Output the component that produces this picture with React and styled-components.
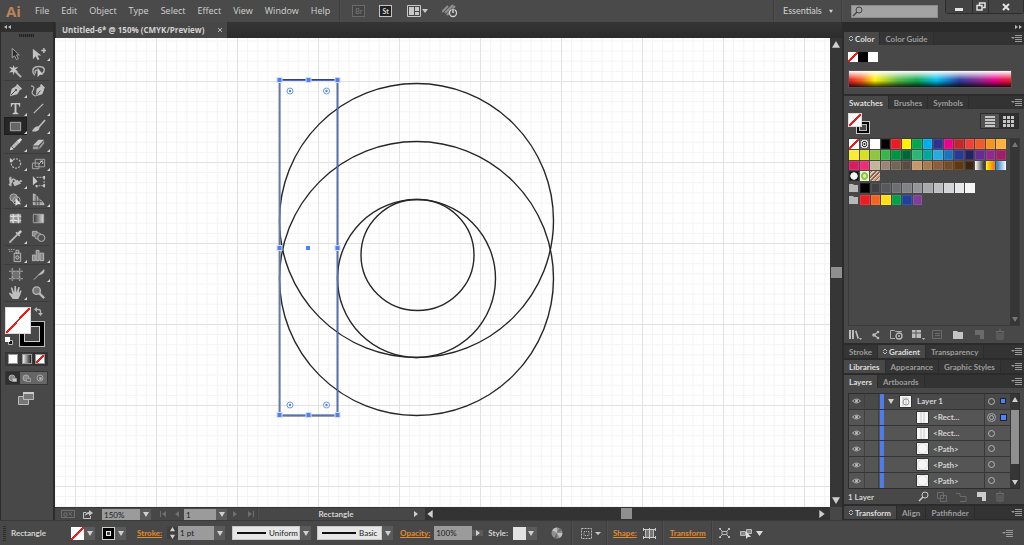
import React, {useState} from 'react';
import styled, {createGlobalStyle, css} from 'styled-components';

const GlobalStyle = createGlobalStyle`
  * {
    box-sizing: border-box;
  }

  body {
    margin: 0;
    background: #484848;
    color: #d2d2d2;
    font: 8px/12px Lato, "Open Sans", sans-serif;
  }

  button, input, select {
    font: inherit;
    color: inherit;
    margin: 0;
    padding: 0;
    border: 0;
    border-radius: 0;
    background: none;
  }

  button {
    display: flex;
    align-items: center;
    justify-content: center;
    white-space: nowrap;
  }

  svg {
    display: block;
    flex: none;
  }
`;

const Screen = styled.div`
  display: flex;
  flex-direction: column;
  height: 100vh;
  min-height: 545px;
  overflow: hidden;
`;

/* ---------- small shared parts ---------- */

const points = {
  up: '0,5 3,0 6,5',
  down: '0,1 6,1 3,6',
  left: '5,0 5,6 1,3',
  right: '1,0 1,6 5,3',
};

function Triangle({ dir = 'down', size = 6, color = '#d0d0d0' }) {
  return (
    <svg width={size} height={size} viewBox="0 0 6 6" aria-hidden="true">
      <polygon points={points[dir]} fill={color} />
    </svg>
  );
}

const Spacer = styled.div`
  flex: 1;
`;

const Gap = styled.span`
  flex: none;
  width: ${({ $size }) => $size}px;
`;

const Divider = styled.span`
  align-self: stretch;
  width: 2px;
  background: #3e3e3e;
  border-right: 1px solid #505050;
`;

const IconButton = styled.button`
  width: ${({ $width = 16 }) => $width}px;
  height: ${({ $height = 14 }) => $height}px;
  opacity: ${({ $dim }) => ($dim ? 0.3 : 1)};
`;

const none = 'linear-gradient(to bottom right, #fff calc(50% - 1px), #f01818 0 calc(50% + 1px), #fff 0)';

const NoneBox = styled.span`
  display: block;
  flex: none;
  width: ${({ $size }) => $size}px;
  height: ${({ $size }) => $size}px;
  background: ${none};
`;

/* ---------- menu bar ---------- */

const TopBar = styled.header`
  display: flex;
  align-items: center;
  height: 22px;
  flex: none;
  background: #4a4a4a;
  font-size: 9px;
`;

const Logo = styled.span`
  width: 29px;
  padding-left: 6px;
  color: #c08258;
  font: bold 15px/20px "Open Sans", sans-serif;
`;

const Menu = styled.nav`
  display: flex;
  gap: 12px;
  padding: 0 9px 0 6px;
  font-family: "Open Sans", sans-serif;
`;

const TopIcons = styled.div`
  display: flex;
  align-items: center;
  gap: 14px;
  padding-left: 11px;
`;

const AppBadge = styled.button`
  width: 13px;
  height: 12px;
  border: 1px solid ${({ $on }) => ($on ? '#c4c4c4' : '#6a6a6a')};
  background: ${({ $on }) => ($on ? '#222' : '#444')};
  color: ${({ $on }) => ($on ? '#ddd' : '#707070')};
  font-size: 7px;
  font-weight: bold;
  line-height: 8px;
`;

const Workspace = styled.label`
  display: flex;
  align-items: center;
  gap: 6px;
  padding: 0 8px;
`;

const WorkspaceSelect = styled.select`
  appearance: none;
  width: 40px;
`;

const SearchBox = styled.label`
  display: flex;
  align-items: center;
  width: 87px;
  height: 13px;
  margin: 0 7px 0 8px;
  background: #a3a3a3;
  border: 1px solid #8c8c8c;
`;

const SearchInput = styled.input`
  flex: 1;
  min-width: 0;
  color: #222;
`;

const WindowButtons = styled.div`
  display: flex;
  align-self: flex-start;
  border: 1px solid #2c2c2c;
  border-top: 0;
  border-radius: 0 0 3px 3px;
`;

const WindowButton = styled.button`
  width: ${({ $width }) => $width}px;
  height: 13px;
  background: #434343;

  & + & {
    border-left: 1px solid #2c2c2c;
  }
`;

const menuItems = ['File', 'Edit', 'Object', 'Type', 'Select', 'Effect', 'View', 'Window', 'Help'];

function MenuBar() {
  return (
    <TopBar>
      <Logo>Ai</Logo>
      <Menu>
        {menuItems.map((item) => <button key={item}>{item}</button>)}
      </Menu>
      <Divider />
      <TopIcons>
        <AppBadge>Br</AppBadge>
        <AppBadge $on>St</AppBadge>
        <IconButton $width={22} aria-label="Arrange documents">
          <svg width="21" height="12" viewBox="0 0 21 12">
            <path fill="#484848" stroke="#c8c8c8" d="M.5.5h13v11H.5z" />
            <path fill="#c8c8c8" d="M2 2h5v8H2zM8 2h4v4H8zM8 7h4v3H8zM15 4h6l-3 4z" />
          </svg>
        </IconButton>
        <IconButton aria-label="GPU performance">
          <svg width="16" height="14" viewBox="0 0 16 14">
            <path stroke="#8e8e8e" strokeWidth="2" d="m0 8 6-6M3 9l8-8M5 11l8-9" />
            <circle cx="11" cy="9" r="3.500" fill="#4a4a4a" stroke="#d4d4d4" strokeWidth="1.300" />
            <path stroke="#4a4a4a" strokeWidth="3" d="M11 4v3" />
            <path stroke="#e8e8e8" strokeWidth="1.300" d="M11 4.500V9" />
          </svg>
        </IconButton>
      </TopIcons>
      <Spacer />
      <Divider />
      <Workspace>
        <WorkspaceSelect aria-label="Workspace">
          <option>Essentials</option>
        </WorkspaceSelect>
        <Triangle size={4} />
      </Workspace>
      <Divider />
      <SearchBox>
        <svg width="12" height="11" viewBox="0 0 12 11">
          <circle cx="7" cy="4" r="3" fill="none" stroke="#444" />
          <path stroke="#444" strokeWidth="1.400" d="M5 6 1 10" />
        </svg>
        <SearchInput type="search" aria-label="Search" />
      </SearchBox>
      <WindowButtons>
        <WindowButton $width={26} aria-label="Minimize">
          <svg width="8" height="10" viewBox="0 0 8 10"><path fill="#e4e4e4" d="M0 6h8v3H0z" /></svg>
        </WindowButton>
        <WindowButton $width={16} aria-label="Restore">
          <svg width="10" height="9" viewBox="0 0 10 9">
            <path fill="none" stroke="#e4e4e4" strokeWidth="1.500" d="M3.500 3V1h5.500v4.500H7M1 3.500h5V8H1z" />
          </svg>
        </WindowButton>
        <WindowButton $width={35} aria-label="Close">
          <svg width="8" height="8" viewBox="0 0 8 8"><path stroke="#e4e4e4" strokeWidth="2" d="m1 1 6 6M7 1 1 7" /></svg>
        </WindowButton>
      </WindowButtons>
    </TopBar>
  );
}

/* ---------- tool panel ---------- */

const Main = styled.div`
  display: flex;
  flex: 1;
  min-height: 0;
  background: #2d2d2d;
`;

const ToolPanel = styled.aside`
  display: flex;
  flex-direction: column;
  width: 55px;
  flex: none;
  border-right: 2px solid #2b2b2b;
  border-left: 1px solid #2b2b2b;
  background: #484848;
`;

const ToolHeader = styled.div`
  height: 10px;
  padding: 2px 3px;
  background: #2f2f2f;
`;

const Grip = styled.div`
  width: 15px;
  height: 3px;
  margin: 2px 0 7px 18px;
  background: repeating-linear-gradient(to right, #222 0 1px, #3a3a3a 1px 2px);
`;

const ToolGroup = styled.div`
  display: grid;
  grid-template-columns: 23px 23px;
  margin: 0 4px 0 3px;
  border-bottom: 1px solid #3c3c3c;
`;

const ToolButton = styled.button`
  position: relative;
  height: 18px;

  ${({ $active }) => $active && css`
    background: #262626;
    box-shadow: inset 0 0 0 1px #1e1e1e;
  `}

  ${({ $more }) => $more && css`
    &::after {
      content: "";
      position: absolute;
      right: 0;
      bottom: 1px;
      border-left: 3px solid transparent;
      border-bottom: 3px solid #d6d6d6;
    }
  `}
`;

const toolGroups = [
  [
    ['Selection', <path fill="#2c2c2c" stroke="#a8a8a8" d="M4.500 2.500v10l2.500-2 2 4 2-1-2-4h3z" />],
    ['Direct Selection', <path fill="#c2c2c2" d="M2 3v11l3-3 2 4 2-1-2-4h4zM11 4h2V2h1.500v2h2v1.500h-2v2H13v-2h-2z" />, 1],
    ['Magic Wand', <><path stroke="#b8b8b8" strokeWidth="2" d="m8 8 6 6" /><path fill="#c4c4c4" d="m6 1 1 3 4-1-3 3 3 2-4 .5L6 12 5 8.500 1 9l3-3-3-3 4 1z" /></>],
    ['Lasso', <><path fill="none" stroke="#b0b0b0" strokeWidth="1.600" d="M4 12c-3-3-3-8 2-9 5-1 9 1 8 4 0 2-1 3-3 3M5 10c-2-2 0-4 2-3" /><path fill="#ccc" d="M7 4v10l2.500-2.500H13z" /></>],
  ],
  [
    ['Pen', <><path fill="#c2c2c2" d="m2 14 2-8 5-3 4 4-3 5z" /><path fill="#c2c2c2" d="m10 1 5 5-1.500 1.500-5-5z" /><path stroke="#444" d="m3 13 5-5" /><circle cx="8.500" cy="7.500" r="1.200" fill="#444" /></>, 1],
    ['Curvature', <><path fill="#c2c2c2" d="m5 14 1-8 5-3 3 4-2 5z" /><path fill="#c2c2c2" d="m11 1 4 4-1.500 1.500-4-4z" /><path stroke="#444" d="m6 13 4-5" /><path fill="none" stroke="#bbb" strokeWidth="1.200" d="M0 3c3 0 4 2 2 5s0 5 3 6" /></>],
    ['Type', <path fill="#c8c8c8" d="M3 2h10v4h-1c0-2-1-2.500-3-2.500V12l2 1v1H5v-1l2-1V3.500C5 3.500 4 4 4 6H3z" />, 1],
    ['Line Segment', <path stroke="#bbb" strokeWidth="1.300" d="M3 13 13 3" />, 1],
    ['Rectangle', <path fill="#666" stroke="#b0b0b0" d="M2.500 3.500h11v9h-11z" />, 1],
    ['Paintbrush', <><path stroke="#bbb" strokeWidth="1.800" d="m15 1-7 8" /><path fill="#bfbfbf" d="M8 8c-3-1-5 2-7 5 4 1 8 0 8-4z" /></>, 1],
    ['Pencil', <><path stroke="#bbb" strokeWidth="3.500" d="m12 4-7 7" /><path fill="#ddd" d="m10 4 3-3 2 2-3 3zM2 14l1-4 3 3z" /></>, 1],
    ['Eraser', <><path fill="#c5c5c5" d="m2 9 6-6h6L8 9z" /><path fill="#9a9a9a" d="M2 10h6v3H2zM9 10l5-6v3l-5 6z" /></>, 1],
  ],
  [
    ['Rotate', <><circle cx="8.500" cy="8" r="5" fill="none" stroke="#b5b5b5" strokeWidth="1.300" strokeDasharray="2 1.300" /><path fill="#ccc" d="M2 2v5l4-2z" /></>, 1],
    ['Scale', <><path fill="none" stroke="#aaa" d="M1.500 7.500h7v6h-7zM4.500 3.500h10v8h-10z" /><path stroke="#ccc" d="m8 9 4-4M9.500 5.500h3v3" fill="none" /></>, 1],
    ['Width', <><path fill="none" stroke="#bbb" strokeWidth="1.500" d="M3 3v10M1 12c5-5 3-8 6-6s1 6 4 4 1-4 4-2" /><path fill="#bbb" d="m1 3 4 5-3 4zM5 9l5-3 4 4-7 3z" /></>, 1],
    ['Free Transform', <><path fill="none" stroke="#bbb" strokeDasharray="2 1" d="M6 3.500h8v9H5" /><path fill="#c8c8c8" d="M2 2v10l5-4z" /><path fill="#ccc" d="M13 2h2v3h-2zM13 11h2v3h-2zM5 12h2v2H5z" /></>],
    ['Shape Builder', <><circle cx="6" cy="6" r="4" fill="#777" stroke="#b2b2b2" /><circle cx="9" cy="9" r="4" fill="none" stroke="#b2b2b2" /><path fill="#ddd" d="M8 6v9l2-2h4z" /></>, 1],
    ['Perspective Grid', <><path fill="#a0a0a0" stroke="#c0c0c0" d="M2.500 2v11.500H14L12 10 9 8 5 3z" /><path stroke="#4a4a4a" d="M5.500 3v11M8.500 6v8M2 10h10" /></>, 1],
  ],
  [
    ['Mesh', <><path fill="#999" d="M2 3h12v10H2z" /><path fill="none" stroke="#e2e2e2" strokeWidth="1.200" d="M2 5c4 3 8-2 12 1M2 11c4-4 8 2 12-1M5 3c3 4-2 7 1 10M11 3c-2 4 2 6 0 10" /></>],
    ['Gradient', <><defs><linearGradient id="tool-gradient"><stop stopColor="#333" /><stop offset="1" stopColor="#ddd" /></linearGradient></defs><path fill="url(#tool-gradient)" stroke="#aaa" d="M2.500 3.500h11v9h-11z" /></>],
    ['Eyedropper', <><path stroke="#bbb" strokeWidth="1.800" d="m3 13 7-7" /><path fill="#c8c8c8" d="m8 4 4 4 1-1-1-1 3-3-2-2-3 3-1-1zM2 12l2 2-3 1z" /></>, 1],
    ['Blend', <><path fill="#888" stroke="#b5b5b5" d="M1.500 2.500h5v5h-5z" /><circle cx="7.500" cy="7.500" r="3.500" fill="#666" stroke="#aaa" /><circle cx="11" cy="9.500" r="3.800" fill="#505050" stroke="#bbb" /></>],
  ],
  [
    ['Symbol Sprayer', <><path fill="#555" stroke="#bbb" d="M6.500 5.500h7v9h-7zM8.500 2.500h3v3h-3z" /><circle cx="10" cy="10" r="1.700" fill="none" stroke="#ccc" /><path stroke="#aaa" strokeDasharray="1.500 1" d="M7 1.500H0M5 3.500H0" /></>, 1],
    ['Column Graph', <path fill="#888" stroke="#bbb" d="M1.500 7.500h3v6h-3zM5.500 2.500h3v11h-3zM9.500 5.500h4v8h-4z" />, 1],
  ],
  [
    ['Artboard', <><path fill="#707070" d="M4 4h9v8H4z" /><path fill="none" stroke="#b5b5b5" d="M4.500 1v14M12.500 1v14M1 4.500h15M1 12.500h15" strokeDasharray="3 1" /></>],
    ['Slice', <path fill="#bbb" d="m2 14 7-7 5-5c1 2 0 5-3 6l-3 1-4 4z" />, 1],
    ['Hand', <path fill="#c0c0c0" d="M5 15 1 9l1-1 3 2-2-7 1.500-.5L6.500 8 7 1h1.500L9 8l2-6 1.500.5-1 6 2-3 1 .5L13 11l-2 4z" />, 1],
    ['Zoom', <><circle cx="6" cy="6" r="4" fill="#777" stroke="#b8b8b8" strokeWidth="1.500" /><path stroke="#b8b8b8" strokeWidth="2.500" d="m9 9 5 5" /></>],
  ],
];

const PaintArea = styled.div`
  display: grid;
  grid-template-columns: 14px 12px 14px;
  grid-template-rows: 14px 13px 13px;
  margin: 5px 0 5px 4px;
`;

const FillChip = styled.button`
  grid-area: 1 / 1 / 3 / 3;
  z-index: 1;
  border: 1px solid #d8d8d8;
  background: ${none};
`;

const StrokeChip = styled.button`
  grid-area: 2 / 2 / 4 / 4;
  border: 1px solid #bbb;
  background: #000;

  &::after {
    content: "";
    width: 14px;
    height: 14px;
    border: 1px solid #ccc;
    background: #484848;
  }
`;

const SwapButton = styled.button`
  grid-area: 1 / 3;
  align-self: start;
`;

const DefaultButton = styled.button`
  grid-area: 3 / 1;
  justify-content: flex-start;
`;

const ModeRow = styled.div`
  display: flex;
  margin: 0 5px ${({ $after }) => $after}px 4px;
  border: 1px solid #353535;
  background: ${({ $light }) => ($light ? '#666' : '#3c3c3c')};
`;

const ModeButton = styled.button`
  flex: 1;
  height: 12px;
  background: ${({ $active }) => ($active ? '#2f2f2f' : 'none')};
`;

const ColorTile = styled.span`
  width: 10px;
  height: 10px;
  border: 1px solid #999;
  background: ${({ $paint }) => $paint};
`;

function Toolbox() {
  const [tool, setTool] = useState('Rectangle');

  return (
    <ToolPanel>
      <ToolHeader>
        <svg width="7" height="6" viewBox="0 0 7 6"><path fill="#bbb" d="M3 1v4L0 3zM7 1v4L4 3z" /></svg>
      </ToolHeader>
      <Grip />
      {toolGroups.map((group) => (
        <ToolGroup key={group[0][0]}>
          {group.map(([name, icon, more]) => (
            <ToolButton key={name} aria-label={name} $active={name === tool} $more={more} onClick={() => setTool(name)}>
              <svg width="15" height="15" viewBox="0 0 16 16">{icon}</svg>
            </ToolButton>
          ))}
        </ToolGroup>
      ))}
      <PaintArea>
        <FillChip aria-label="Fill" />
        <StrokeChip aria-label="Stroke" />
        <SwapButton aria-label="Swap fill and stroke">
          <svg width="9" height="9" viewBox="0 0 9 9">
            <path fill="none" stroke="#b5b5b5" strokeWidth="1.300" d="M2 2.500h2.500q2 0 2 2V7" />
            <path fill="#b5b5b5" d="M3 0v5L0 2.500zM4 6h5L6.500 9z" />
          </svg>
        </SwapButton>
        <DefaultButton aria-label="Default fill and stroke">
          <svg width="8" height="8" viewBox="0 0 8 8">
            <path fill="#111" stroke="#bbb" d="M3.500 3.500h4v4h-4z" /><path fill="#fff" d="M0 0h5v5H0z" />
          </svg>
        </DefaultButton>
      </PaintArea>
      <ModeRow $after={5}>
        <ModeButton aria-label="Color"><ColorTile $paint="#fff" /></ModeButton>
        <ModeButton aria-label="Gradient"><ColorTile $paint="linear-gradient(to right, #eee, #222)" /></ModeButton>
        <ModeButton aria-label="None" $active><ColorTile $paint={none} /></ModeButton>
      </ModeRow>
      <ModeRow $light $after={6}>
        {['Draw Normal', 'Draw Behind', 'Draw Inside'].map((name, i) => (
          <ModeButton key={name} aria-label={name} $active={i === 0}>
            <svg width="9" height="9" viewBox="0 0 9 9">
              <circle cx="4" cy="4" r="3" fill={i === 2 ? 'none' : '#888'} stroke="#aaa" />
              <path fill={i === 1 ? '#666' : '#ccc'} stroke="#999" d={i === 2 ? 'M3.500 3.500h2v2h-2z' : 'M4.500 4.500h4v3h-4z'} />
            </svg>
          </ModeButton>
        ))}
      </ModeRow>
      <IconButton $width={50} aria-label="Screen mode">
        <svg width="16" height="13" viewBox="0 0 16 13">
          <path fill="#777" stroke="#bbb" d="M.5 4.500h10v8H.5z" />
          <path fill="#777" stroke="#bbb" d="M5.500.500h10v7h-10z" />
          <path fill="#ccc" d="M5 0h11v2H5z" />
        </svg>
      </IconButton>
    </ToolPanel>
  );
}

/* ---------- document ---------- */

const DocumentArea = styled.main`
  display: flex;
  flex-direction: column;
  flex: 1;
  min-width: 0;
`;

const TabStrip = styled.div`
  display: flex;
  height: 16px;
  flex: none;
  background: linear-gradient(#353535, #2c2c2c);
`;

const DocumentTab = styled.button`
  gap: 14px;
  padding: 0 5px 0 6px;
  margin-left: 1px;
  background: #474747;
  font-family: "Open Sans", sans-serif;
  font-weight: bold;
`;

const CanvasRow = styled.div`
  display: flex;
  flex: 1;
  min-height: 0;
`;

const Artboard = styled.svg`
  flex: 1;
  min-width: 0;
  height: 100%;
  background: #fff;
`;

const VerticalScroll = styled.div`
  display: flex;
  flex-direction: column;
  align-items: center;
  justify-content: space-between;
  width: ${({ $width = 12 }) => $width}px;
  flex: none;
  padding: 3px 0;
  background: #363636;
`;

const Thumb = styled.span`
  width: ${({ $width = 11 }) => $width}px;
  height: ${({ $height = 11 }) => $height}px;
  background: #8f8f8f;
`;

const handles = [[224.5, 42], [253.5, 42], [282.5, 42], [224.5, 210], [282.5, 210], [224.5, 377], [253.5, 377], [282.5, 377]];
const corners = [[235, 53], [271.5, 53], [235, 367], [271.5, 367]];

function Drawing() {
  return (
    <Artboard role="img" aria-label="Artboard">
      <defs>
        <pattern id="minor" width="10.125" height="10.125" patternUnits="userSpaceOnUse" x="20" y="43">
          <path fill="none" stroke="#f3f3f3" d="M0 .5h10.125M.5 0v10.125" />
        </pattern>
        <pattern id="major" width="81" height="81" patternUnits="userSpaceOnUse" x="20" y="43">
          <path fill="none" stroke="#e2e2e2" d="M0 .5h81M.5 0v81" />
        </pattern>
      </defs>
      <rect width="100%" height="100%" fill="url(#minor)" />
      <rect width="100%" height="100%" fill="url(#major)" />
      <g fill="none" stroke="#262626" strokeWidth="1.400">
        <circle cx="361.500" cy="182.500" r="137" />
        <circle cx="361.500" cy="240.500" r="137" />
        <circle cx="361.500" cy="240.500" r="79" />
        <ellipse cx="362.500" cy="217" rx="56.500" ry="55.500" />
        <path stroke="#3d4260" strokeWidth="1.800" d="M224.500 42h58v335.500h-58" />
        <path stroke="#777" strokeWidth="1.800" d="M224.500 42v335.500" />
        <path stroke="#4f7df0" strokeWidth=".8" d="M225 42.500h57.500v335H225z" />
      </g>
      {handles.map(([x, y]) => (
        <g key={`${x}-${y}`}>
          <rect x={x - 3} y={y - 3} width="6" height="6" fill="#d5e0ff" />
          <rect x={x - 2} y={y - 2} width="4" height="4" fill="#4f80f8" />
        </g>
      ))}
      <rect x="251" y="208" width="4" height="4" fill="#4f80ff" />
      {corners.map(([x, y]) => (
        <g key={`${x}-${y}`}>
          <circle cx={x} cy={y} r="3" fill="#fff" stroke="#6c94f5" />
          <circle cx={x} cy={y} r="1.200" fill="#4f80ff" />
        </g>
      ))}
    </Artboard>
  );
}

const StatusBar = styled.div`
  display: flex;
  height: 13px;
  flex: none;
  background: #474747;
`;

const StatusTools = styled.div`
  display: flex;
  align-items: center;
  width: 370px;
  flex: none;
  padding-left: 4px;
  border-top: 1px solid #353535;
`;

const StatusLabel = styled.span`
  flex: 1;
  padding-left: 6px;
  text-align: center;
  font-weight: bold;
`;

const HorizontalScroll = styled.div`
  display: flex;
  flex: 1;
  align-items: center;
  justify-content: space-between;
  padding: 0 4px 0 1px;
  background: #333;
`;

const Combo = styled.label`
  display: flex;
  align-items: center;
  flex: none;
  width: ${({ $width }) => $width}px;
  height: ${({ $height = 14 }) => $height}px;
  background: #5b5b5b;
  color: #202020;
`;

const ComboArrow = styled.span`
  display: flex;
  width: 11px;
  justify-content: center;
`;

const ComboSelect = styled.select`
  appearance: none;
  flex: 1;
  min-width: 0;
  height: 100%;
  padding-left: 2px;
  background: #9b9b9b;
`;

const LineSelect = styled(ComboSelect)`
  padding-left: ${({ $line }) => $line + 7}px;
  border: 1px solid #c8c8c8;
  background: linear-gradient(#111, #111) 4px 5px / ${({ $line }) => $line}px 2px no-repeat, #e6e6e6;
`;

function ComboBox({ label, width, height, value }) {
  return (
    <Combo $width={width} $height={height}>
      <ComboSelect aria-label={label}><option>{value}</option></ComboSelect>
      <ComboArrow><Triangle /></ComboArrow>
    </Combo>
  );
}

function Status() {
  return (
    <StatusBar>
      <StatusTools>
        <IconButton $width={18} $height={10} $dim aria-label="GPU preview">
          <svg width="14" height="8" viewBox="0 0 14 8">
            <path fill="none" stroke="#ccc" d="M.5.5h13v7H.5zM3 3h3v3H3zM8 2l3 4M8 5l3-3" />
          </svg>
        </IconButton>
        <IconButton $width={22} $height={11} aria-label="Share">
          <svg width="10" height="9" viewBox="0 0 10 9">
            <path fill="none" stroke="#c4c4c4" d="M3 2.500H.5v6h7V6" /><path fill="#c4c4c4" d="M2 6c0-3 2-4 4-4V0l4 3-4 3V4C4 4 3 5 2 6z" />
          </svg>
        </IconButton>
        <Gap $size={3} />
        <ComboBox label="Zoom" width={49} height={11} value="150%" />
        <Gap $size={5} />
        <IconButton $width={14} $height={10} $dim aria-label="First artboard">
          <svg width="7" height="6" viewBox="0 0 7 6"><path fill="#ccc" d="M0 0h1v6H0zM6 0v6L2 3z" /></svg>
        </IconButton>
        <IconButton $width={14} $height={10} $dim aria-label="Previous artboard"><Triangle dir="left" /></IconButton>
        <ComboBox label="Artboard" width={43} height={11} value="1" />
        <IconButton $width={16} $height={10} $dim aria-label="Next artboard"><Triangle dir="right" /></IconButton>
        <IconButton $width={14} $height={10} $dim aria-label="Last artboard">
          <svg width="7" height="6" viewBox="0 0 7 6"><path fill="#ccc" d="M6 0h1v6H6zM1 0v6l4-3z" /></svg>
        </IconButton>
        <Divider />
        <StatusLabel>Rectangle</StatusLabel>
        <IconButton $width={18} $height={10} aria-label="Status options"><Triangle dir="right" /></IconButton>
      </StatusTools>
      <HorizontalScroll>
        <Triangle dir="left" size={8} />
        <Thumb />
        <Triangle dir="right" size={8} />
      </HorizontalScroll>
      <Gap $size={12} />
    </StatusBar>
  );
}

/* ---------- right dock ---------- */

const Dock = styled.aside`
  display: flex;
  flex-direction: column;
  width: 182px;
  flex: none;
  padding-left: 2px;
  background: #2b2b2b;
`;

const DockHeader = styled.div`
  display: flex;
  align-items: center;
  justify-content: flex-end;
  height: 10px;
  padding-right: 2px;
`;

const PanelFrame = styled.section`
  display: flex;
  flex-direction: column;
  flex: ${({ $grow }) => ($grow ? 1 : 'none')};
  margin-bottom: 2px;
  background: #484848;

  &:last-child {
    margin-bottom: 1px;
  }
`;

const Tabs = styled.div`
  display: flex;
  height: 13px;
  flex: none;
  background: #333;
`;

const Tab = styled.button`
  gap: 2px;
  padding: 0 5px;
  background: ${({ $active }) => ($active ? '#484848' : '#353535')};
  color: ${({ $active }) => ($active ? '#dedede' : '#9c9c9c')};
  font-weight: bold;
  border-right: 1px solid #2c2c2c;
`;

function PanelTabs({ names, active, arrows }) {
  const [current, setCurrent] = useState(active);

  return (
    <Tabs>
      {names.map((name) => (
        <Tab key={name} $active={name === current} onClick={() => setCurrent(name)}>
          {arrows && name === active && (
            <svg width="4" height="7" viewBox="0 0 4 7"><path fill="none" stroke="#bbb" d="m0 3 2-2 2 2M0 4l2 2 2-2" /></svg>
          )}
          {name}
        </Tab>
      ))}
      <Spacer />
      <PanelMenu />
    </Tabs>
  );
}

function PanelMenu() {
  return (
    <IconButton $width={16} $height={13} aria-label="Panel menu">
      <svg width="11" height="7" viewBox="0 0 11 7"><path fill="#999" d="M0 2h4L2 4zM4 0h7v1H4zM4 2h7v1H4zM4 4h7v1H4zM4 6h7v1H4z" /></svg>
    </IconButton>
  );
}

const ColorBody = styled.div`
  padding: 7px 12px 6px 4px;
`;

const ChipRow = styled.div`
  display: flex;
  margin-bottom: 8px;
`;

const Chip = styled.span`
  width: ${({ $size = 10 }) => $size}px;
  height: ${({ $size = 10 }) => $size}px;
  background: ${({ $paint }) => $paint};
`;

const Spectrum = styled.div`
  height: 18px;
  border: 1px solid #555;
  background:
    linear-gradient(to bottom, #fff 0%, #fff0 55%, #0000 60%, #000c 100%),
    linear-gradient(to right, #ed1c24, #f26522 8%, #fff200 16%, #5cb947 30%, #12a850 42%, #00bff3 54%, #2e3f9e 68%, #92278f 81%, #ec008c 90%, #ed1c24);
`;

const SwatchTop = styled.div`
  display: flex;
  align-items: flex-start;
  justify-content: space-between;
  height: 29px;
  padding: 4px 5px 0 4px;
`;

const PaintPair = styled.div`
  display: grid;
  grid-template-columns: 8px 6px 8px;
  grid-template-rows: 8px 6px 7px;
`;

const PairFill = styled.span`
  grid-area: 1 / 1 / 3 / 3;
  z-index: 1;
  border: 1px solid #ddd;
  background: ${none};
`;

const PairStroke = styled.span`
  grid-area: 2 / 2 / 4 / 4;
  border: 1px solid #ccc;
  background: #484848;
  box-shadow: inset 0 0 0 2px #000, inset 0 0 0 3px #bbb;
`;

const ViewButtons = styled.div`
  display: flex;
  border: 1px solid #2c2c2c;
  background: #2f2f2f;
`;

const ViewButton = styled(IconButton)`
  background: ${({ $active }) => ($active ? '#2f2f2f' : '#525252')};
`;

const SwatchMain = styled.div`
  display: flex;
  flex: 1;
  margin: 0 4px;
  border: 1px solid #3a3a3a;
`;

const SwatchList = styled.div`
  flex: 1;
  display: flex;
  flex-direction: column;
  gap: 2px;
`;

const SwatchGrid = styled.div`
  display: grid;
  grid-template-columns: repeat(15, 1fr);
  grid-auto-rows: 1fr;
  gap: 1px;
  width: 157px;
  height: ${({ $height }) => $height}px;
`;

const Swatch = styled.button`
  min-width: 0;
  background: ${({ $paint }) => $paint};
  box-shadow: inset 0 0 0 1px #ffffff1a;
`;

const PanelFooter = styled.div`
  display: flex;
  align-items: center;
  height: 17px;
  flex: none;
  padding: 0 16px 0 4px;
  justify-content: space-between;
`;

const registration = 'radial-gradient(#333 15%, #ddd 18% 30%, #333 33% 42%, #ddd 46% 60%, #555 64%)';

const swatches = [
  none, registration, '#fff', '#000', '#ed1c24', '#fff200', '#00a651', '#00aeef', '#2e3192', '#ec008c', '#c1272d', '#ef4136', '#f15a29', '#f7941e', '#fbb040',
  '#f9ed32', '#d7df23', '#8dc63f', '#39b54a', '#009444', '#006838', '#2bb673', '#00a79d', '#27aae1', '#1c75bc', '#2b3990', '#262262', '#662d91', '#92278f', '#9e1f63',
  '#da1c5c', '#ee2a7b', '#c2b59b', '#9b8579', '#726658', '#594a42', '#c49a6c', '#a97c50', '#8b5e3c', '#754c29', '#603913', '#3c2415',
  'linear-gradient(to right, #fff, #222)', 'linear-gradient(to right, #fff200, #ed6a1c)', 'linear-gradient(to right, #1c75bc, #fff)',
  'radial-gradient(#f4f4f4 48%, #111 56%)', 'radial-gradient(#d9efb8 20%, #8dc63f 30% 50%, #e6f5cf 60%)',
  'repeating-linear-gradient(135deg, #c8a488 0 1px, #8c6250 1px 2px, #e2cbb5 2px 3px)',
];
const grays = ['#000', '#414042', '#58595b', '#6d6e71', '#808285', '#939598', '#a7a9ac', '#bcbec0', '#d1d3d4', '#e6e7e8', '#f5f5f5'];
const brights = ['#ed1c24', '#f26522', '#ffde17', '#00a14b', '#21409a', '#7f3f98'];

function FolderIcon({ size = 10 }) {
  return (
    <svg width={size} height={size} viewBox="0 0 10 10"><path fill="#b8b8b8" d="M0 1h4l1 1h4v7H0z" /></svg>
  );
}

function SwatchFolder({ name, colors }) {
  return (
    <SwatchGrid $height={10}>
      <FolderIcon />
      {colors.map((color) => <Swatch key={color} $paint={color} aria-label={`${name} ${color}`} />)}
    </SwatchGrid>
  );
}

const swatchActions = [
  ['Swatch libraries', <path fill="#bbb" d="M1 1h2v9H1zM4 1h2v9H4zM7 2l1.500-.500L11 9l-1.500 1zM11 9h3l-1.500 2z" />],
  ['Share', <><path fill="none" stroke="#bbb" strokeWidth="1.200" d="M9 3 5 6l4 3" /><circle cx="5" cy="6" r="1.800" fill="#bbb" /><circle cx="9" cy="3" r="1.300" fill="#bbb" /><circle cx="9" cy="9" r="1.300" fill="#bbb" /></>],
  ['Add to library', <><path fill="none" stroke="#aaa" d="M5 9.500H.5v-8h4l1 1H12" /><circle cx="9" cy="7" r="3" fill="none" stroke="#bbb" strokeWidth="1.300" /><circle cx="9" cy="7" r="1" fill="#bbb" /></>],
  ['Swatch kinds', <><path fill="#bbb" d="M1 1h9v8H1z" /><path stroke="#555" d="M1 4h9M5 1v8" /><path fill="#bbb" d="M11 9h3l-1.500 2z" /></>],
  ['Swatch options', <path fill="none" stroke="#bbb" d="M1.500 1.500h9v8h-9zM4 4.500h5M4 6.500h5" />, true],
  ['New color group', <path fill="#c4c4c4" d="M1 2h4l1 1h5v7H1z" />],
  ['New swatch', <path fill="#bbb" d="M2 1h9v9H7V6H2z" />, true],
  ['Delete swatch', <path fill="none" stroke="#bbb" d="M2 2.500h8M5 1h2M3 3v7h6V3M5 4v5M7 4v5" />, true],
];

/* ---------- layers ---------- */

const LayersBody = styled.div`
  padding: 5px 4px 0;
`;

const LayerFrame = styled.div`
  display: flex;
  height: 96px;
  border: 1px solid #2e2e2e;
`;

const LayerList = styled.ul`
  flex: 1;
  display: grid;
  grid-auto-rows: 1fr;
  gap: 1px;
  margin: 0;
  padding: 0;
  background: #353535;
  list-style: none;
`;

const LayerRow = styled.li`
  display: grid;
  grid-template-columns: 14px 15px 4px 1fr 26px;
  gap: 1px;
  align-items: center;
  background: ${({ $top }) => ($top ? '#494949' : '#555')};
  font-weight: bold;
`;

const LayerLock = styled.span`
  align-self: stretch;
  border: solid #404040;
  border-width: 0 1px;
`;

const LayerColor = styled.span`
  align-self: stretch;
  background: #4f7ce8;
`;

const LayerName = styled.div`
  display: flex;
  align-items: center;
  gap: ${({ $top }) => ($top ? 5 : 4)}px;
  padding-left: ${({ $top }) => ($top ? 3 : 31)}px;
`;

const LayerTarget = styled.button`
  align-self: stretch;
  gap: 4px;
  justify-content: flex-start;
  padding-left: 2px;
  border-left: 1px solid #383838;
`;

const Selected = styled.span`
  width: ${({ $size }) => $size}px;
  height: ${({ $size }) => $size}px;
  border: 1px solid #222;
  background: #4f80ff;
`;

const layers = [
  { name: 'Layer 1', top: true, thumb: 'M4 2v9M7 2v9M3 3h7', mark: 6 },
  { name: '<Rect...', thumb: 'M5 1v11M8 1v11', mark: 7 },
  { name: '<Rect...', thumb: 'M5 1v11M8 1v11' },
  { name: '<Path>' },
  { name: '<Path>' },
  { name: '<Path>' },
];

function Layer({ name, top, thumb, mark }) {
  return (
    <LayerRow $top={top}>
      <IconButton $width={14} $height={12} aria-label="Visibility">
        <svg width="9" height="6" viewBox="0 0 9 6">
          <path fill="none" stroke="#b0b0b0" d="M.5 3Q4.500-1 8.500 3 4.500 7 .5 3z" /><circle cx="4.500" cy="3" r="1.500" fill="#bbb" />
        </svg>
      </IconButton>
      <LayerLock />
      <LayerColor />
      <LayerName $top={top}>
        {top && <Triangle />}
        <svg width="13" height="13" viewBox="0 0 13 13">
          <path fill="#f6f6f6" stroke="#333" d="M.5.5h12v12H.5z" />
          {thumb ? <path fill="none" stroke="#c8c8c8" d={thumb} /> : <circle cx="6.500" cy="6.500" r="5" fill="none" stroke="#ddd" />}
          {top && <circle cx="7" cy="7" r="3" fill="none" stroke="#999" />}
        </svg>
        {name}
      </LayerName>
      <LayerTarget aria-label={`Target ${name}`}>
        <svg width="9" height="9" viewBox="0 0 9 9">
          <circle cx="4.500" cy="4.500" r={mark === 7 ? 2 : 3} fill="none" stroke="#b5b5b5" />
          {mark === 7 && <circle cx="4.500" cy="4.500" r="4" fill="none" stroke="#a5a5a5" />}
        </svg>
        {mark && <Selected $size={mark} />}
      </LayerTarget>
    </LayerRow>
  );
}

const LayerFooter = styled(PanelFooter)`
  height: 15px;
  font-weight: bold;
`;

const layerActions = [
  ['Locate object', <><circle cx="8" cy="4" r="3" fill="none" stroke="#ccc" /><path stroke="#ccc" strokeWidth="1.500" d="m6 6-4 4" /></>],
  ['Clipping mask', <path fill="none" stroke="#bbb" d="M1.500 1.500h6v6h-6zM4.500 4.500h6v6h-6z" />, true],
  ['New sublayer', <path fill="none" stroke="#bbb" d="M1 2.500h4v3h6v5H5" />, true],
  ['New layer', <path fill="#ccc" d="M2 1h9v9H7V6H2z" />],
  ['Delete layer', <path fill="none" stroke="#bbb" d="M2 2.500h8M5 1h2M3 3v7h6V3M5 4v5M7 4v5" />, true],
];

function Actions({ items }) {
  return items.map(([name, icon, dim]) => (
    <IconButton key={name} $width={14} $dim={dim} aria-label={name}>
      <svg width="14" height="12" viewBox="0 0 14 12">{icon}</svg>
    </IconButton>
  ));
}

function RightDock() {
  return (
    <Dock>
      <DockHeader>
        <svg width="7" height="6" viewBox="0 0 7 6"><path fill="#bbb" d="M0 1v4l3-2zM4 1v4l3-2z" /></svg>
      </DockHeader>
      <PanelFrame>
        <PanelTabs names={['Color', 'Color Guide']} active="Color" arrows />
        <ColorBody>
          <ChipRow>
            <NoneBox $size={10} />
            <Chip $paint="#000" />
            <Chip $paint="#fff" />
          </ChipRow>
          <Spectrum />
        </ColorBody>
      </PanelFrame>
      <PanelFrame $grow>
        <PanelTabs names={['Swatches', 'Brushes', 'Symbols']} active="Swatches" />
        <SwatchTop>
          <PaintPair>
            <PairFill />
            <PairStroke />
          </PaintPair>
          <ViewButtons>
            <ViewButton $width={18} aria-label="List view">
              <svg width="10" height="11" viewBox="0 0 10 11"><path fill="#c4c4c4" d="M0 0h10v2H0zM0 3h10v2H0zM0 6h10v2H0zM0 9h10v2H0z" /></svg>
            </ViewButton>
            <ViewButton $width={19} $active aria-label="Thumbnail view">
              <svg width="11" height="11" viewBox="0 0 11 11"><path fill="#c4c4c4" d="M0 0h3v3H0zM4 0h3v3H4zM8 0h3v3H8zM0 4h3v3H0zM4 4h3v3H4zM8 4h3v3H8zM0 8h3v3H0zM4 8h3v3H4zM8 8h3v3H8z" /></svg>
            </ViewButton>
          </ViewButtons>
        </SwatchTop>
        <SwatchMain>
          <SwatchList>
            <SwatchGrid $height={42}>
              {swatches.map((paint) => <Swatch key={paint} $paint={paint} aria-label="Swatch" />)}
            </SwatchGrid>
            <SwatchFolder name="Gray" colors={grays} />
            <SwatchFolder name="Bright" colors={brights} />
          </SwatchList>
          <VerticalScroll $width={9}>
            <Triangle dir="up" color="#777" />
            <Triangle color="#777" />
          </VerticalScroll>
        </SwatchMain>
        <PanelFooter><Actions items={swatchActions} /></PanelFooter>
      </PanelFrame>
      <PanelFrame>
        <PanelTabs names={['Stroke', 'Gradient', 'Transparency']} active="Gradient" arrows />
      </PanelFrame>
      <PanelFrame>
        <PanelTabs names={['Libraries', 'Appearance', 'Graphic Styles']} active="Libraries" />
      </PanelFrame>
      <PanelFrame>
        <PanelTabs names={['Layers', 'Artboards']} active="Layers" />
        <LayersBody>
          <LayerFrame>
            <LayerList>
              {layers.map((layer, i) => <Layer key={i} {...layer} />)}
            </LayerList>
            <VerticalScroll $width={9}>
              <Triangle dir="up" />
              <Thumb $width={8} $height={54} />
              <Gap $size={1} />
              <Triangle />
            </VerticalScroll>
          </LayerFrame>
        </LayersBody>
        <LayerFooter>
          1 Layer
          <Gap $size={32} />
          <Actions items={layerActions} />
        </LayerFooter>
      </PanelFrame>
      <PanelFrame>
        <PanelTabs names={['Transform', 'Align', 'Pathfinder']} active="Transform" arrows />
      </PanelFrame>
    </Dock>
  );
}

/* ---------- control bar ---------- */

const ControlBar = styled.footer`
  display: flex;
  align-items: center;
  height: 25px;
  flex: none;
  padding: 0 9px 0 3px;
  border-top: 1px solid #3a3a3a;
  background: #484848;
`;

const SideGrip = styled.span`
  width: 3px;
  height: 15px;
  margin-right: 5px;
  background: repeating-linear-gradient(#2c2c2c 0 1px, #484848 1px 2px);
`;

const ObjectName = styled.span`
  width: 60px;
  font-weight: bold;
`;

const OptionLink = styled.a`
  flex: none;
  color: #e08a2c;
  font-weight: bold;
  text-decoration: underline;
`;

const PaintDrop = styled.button`
  flex: none;
  background: #5b5b5b;
`;

const StrokeBox = styled.span`
  display: flex;
  width: 13px;
  height: 13px;
  padding: 3px;
  border: 1px solid #ccc;
  background: #000;

  &::after {
    content: "";
    flex: 1;
    border: 1px solid #eee;
    background: #444;
  }
`;

const Stepper = styled.span`
  display: flex;
  flex-direction: column;
  gap: 2px;
  align-items: center;
  width: 11px;
  background: #3f3f3f;
`;

const OpacityInput = styled.input`
  width: 38px;
  height: 14px;
  padding-left: 2px;
  background: #9b9b9b;
  color: #202020;
`;

function Controls() {
  return (
    <ControlBar>
      <SideGrip />
      <ObjectName>Rectangle</ObjectName>
      <PaintDrop aria-label="Fill"><NoneBox $size={13} /><ComboArrow><Triangle /></ComboArrow></PaintDrop>
      <Gap $size={7} />
      <PaintDrop aria-label="Stroke color"><StrokeBox /><ComboArrow><Triangle /></ComboArrow></PaintDrop>
      <Gap $size={11} />
      <OptionLink href="#stroke">Stroke:</OptionLink>
      <Gap $size={5} />
      <Stepper><Triangle dir="up" size={5} /><Triangle size={5} /></Stepper>
      <ComboBox label="Stroke weight" width={47} value="1 pt" />
      <Gap $size={7} />
      <Combo $width={79}>
        <LineSelect $line={29} aria-label="Width profile"><option>Uniform</option></LineSelect>
        <ComboArrow><Triangle /></ComboArrow>
      </Combo>
      <Gap $size={6} />
      <Combo $width={76}>
        <LineSelect $line={34} aria-label="Brush"><option>Basic</option></LineSelect>
        <ComboArrow><Triangle /></ComboArrow>
      </Combo>
      <Gap $size={7} />
      <OptionLink href="#opacity">Opacity:</OptionLink>
      <Gap $size={4} />
      <OpacityInput aria-label="Opacity" defaultValue="100%" />
      <PaintDrop aria-label="Opacity slider"><ComboArrow><Triangle dir="right" /></ComboArrow></PaintDrop>
      <Gap $size={5} />
      <b>Style:</b>
      <Gap $size={5} />
      <PaintDrop aria-label="Graphic style"><Chip $size={13} $paint="#e2e2e2" /><ComboArrow><Triangle /></ComboArrow></PaintDrop>
      <Gap $size={12} />
      <IconButton aria-label="Recolor artwork">
        <svg width="12" height="12" viewBox="0 0 12 12">
          <circle cx="6" cy="6" r="5.500" fill="#8f8f8f" />
          <path fill="#bfbfbf" d="M6 6V.5A5.500 5.500 0 0 0 1.200 3.300zM6 6h5.500a5.500 5.500 0 0 1-2.700 4.700z" /><path fill="#6a6a6a" d="M6 6 3.200 10.700A5.500 5.500 0 0 0 6 11.500zM6 6l2.800-4.700a5.500 5.500 0 0 1 2 2z" />
        </svg>
      </IconButton>
      <Gap $size={6} />
      <Divider />
      <Gap $size={8} />
      <IconButton $width={20} aria-label="Align">
        <svg width="20" height="11" viewBox="0 0 20 11">
          <path fill="none" stroke="#bbb" strokeDasharray="2 1" d="M.5.5h10v10H.5z" /><path fill="none" stroke="#bbb" strokeDasharray="1 1" d="M3 3.500h5v4H3z" /><path fill="#ccc" d="M14 4h6l-3 3z" />
        </svg>
      </IconButton>
      <Gap $size={5} />
      <Divider />
      <Gap $size={5} />
      <OptionLink href="#shape">Shape:</OptionLink>
      <Gap $size={5} />
      <IconButton aria-label="Shape properties">
        <svg width="13" height="11" viewBox="0 0 13 11">
          <path fill="#777" stroke="#bbb" d="M2.500 1.500h8v8h-8z" /><path stroke="#ccc" d="M6.500 0v11M0 1.500h13M0 9.500h13M.5 0v3M12.500 0v3M.5 8v3M12.500 8v3" />
        </svg>
      </IconButton>
      <Gap $size={4} />
      <Divider />
      <Gap $size={6} />
      <OptionLink href="#transform">Transform</OptionLink>
      <Gap $size={5} />
      <Divider />
      <Gap $size={4} />
      <IconButton aria-label="Isolate selected object">
        <svg width="11" height="10" viewBox="0 0 11 10">
          <path fill="none" stroke="#bbb" d="M3 3.500h5v3H3zM0 0l3 3M11 0 8 3M0 10l3-3M11 10 8 7M0 2V.5h2M9 .5h1.500V2M0 8v1.500h2M9 9.500h1.500V8" />
        </svg>
      </IconButton>
      <Gap $size={6} />
      <IconButton $width={26} aria-label="Select similar objects">
        <svg width="23" height="11" viewBox="0 0 23 11">
          <path fill="#888" stroke="#bbb" d="M.5 3.500h5v4h-5zM6.500 1.500h5v4h-5z" /><path fill="#ddd" d="M6 3v8l2-2h3zM16 3h7l-3.500 5z" />
        </svg>
      </IconButton>
      <Spacer />
      <PanelMenu />
    </ControlBar>
  );
}

function App() {
  return (
    <Screen>
      <GlobalStyle />
      <MenuBar />
      <Main>
        <Toolbox />
        <DocumentArea>
          <TabStrip>
            <DocumentTab>
              Untitled-6* @ 150% (CMYK/Preview)
              <svg width="4" height="4" viewBox="0 0 4 4"><path stroke="#bbb" d="m0 0 4 4M4 0 0 4" /></svg>
            </DocumentTab>
          </TabStrip>
          <CanvasRow>
            <Drawing />
            <VerticalScroll>
              <Triangle dir="up" size={8} />
              <Thumb />
              <Triangle size={8} />
            </VerticalScroll>
          </CanvasRow>
          <Status />
        </DocumentArea>
        <RightDock />
      </Main>
      <Controls />
    </Screen>
  );
}

export default App;
